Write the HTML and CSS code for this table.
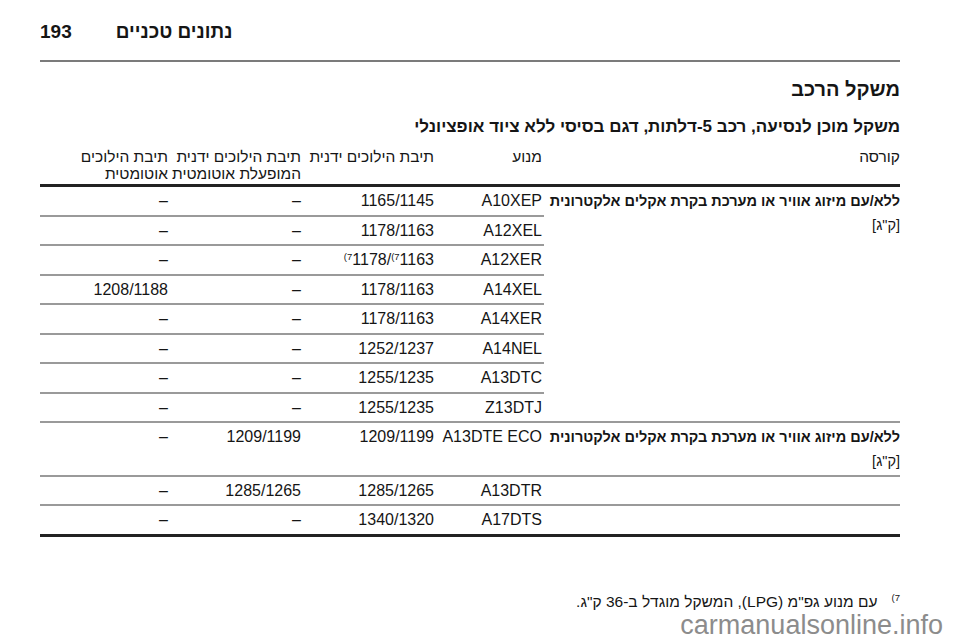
FILE: index.html
```html
<!DOCTYPE html>
<html lang="he">
<head>
<meta charset="utf-8">
<title>משקל הרכב</title>
<link rel="stylesheet" href="styles.css">
</head>
<body>
<div class="page">
  <header class="running-head">
    <span class="page-no">193</span>
    <span class="chapter" dir="rtl">נתונים טכניים</span>
  </header>
  <main class="content" dir="rtl">
    <h1 class="title">משקל הרכב</h1>
    <h2 class="subtitle">משקל מוכן לנסיעה, רכב 5-דלתות, דגם בסיסי ללא ציוד אופציונלי</h2>
    <table class="weights">
      <colgroup>
        <col class="c1"><col class="c2"><col class="c3"><col class="c4"><col class="c5">
      </colgroup>
      <thead>
        <tr>
          <th class="body-col">קורסה</th>
          <th class="eng">מנוע</th>
          <th>תיבת הילוכים ידנית</th>
          <th>תיבת הילוכים ידנית<br>המופעלת אוטומטית</th>
          <th>תיבת הילוכים<br>אוטומטית</th>
        </tr>
      </thead>
      <tbody class="group">
        <tr>
          <td class="body-col" rowspan="8"><b>ללא/עם מיזוג אוויר או מערכת בקרת אקלים אלקטרונית</b><br>[ק"ג]</td>
          <td class="eng num">A10XEP</td><td class="num">1165/1145</td><td class="num">–</td><td class="num">–</td>
        </tr>
        <tr><td class="eng num">A12XEL</td><td class="num">1178/1163</td><td class="num">–</td><td class="num">–</td></tr>
        <tr><td class="eng num">A12XER</td><td class="num"><sup>(7</sup>1178/<sup>(7</sup>1163</td><td class="num">–</td><td class="num">–</td></tr>
        <tr><td class="eng num">A14XEL</td><td class="num">1178/1163</td><td class="num">–</td><td class="num">1208/1188</td></tr>
        <tr><td class="eng num">A14XER</td><td class="num">1178/1163</td><td class="num">–</td><td class="num">–</td></tr>
        <tr><td class="eng num">A14NEL</td><td class="num">1252/1237</td><td class="num">–</td><td class="num">–</td></tr>
        <tr><td class="eng num">A13DTC</td><td class="num">1255/1235</td><td class="num">–</td><td class="num">–</td></tr>
        <tr><td class="eng num">Z13DTJ</td><td class="num">1255/1235</td><td class="num">–</td><td class="num">–</td></tr>
      </tbody>
      <tbody class="group last">
        <tr class="tall">
          <td class="body-col"><b>ללא/עם מיזוג אוויר או מערכת בקרת אקלים אלקטרונית</b><br>[ק"ג]</td>
          <td class="eng num">A13DTE ECO</td><td class="num">1209/1199</td><td class="num">1209/1199</td><td class="num">–</td>
        </tr>
        <tr><td class="body-col"></td><td class="eng num">A13DTR</td><td class="num">1285/1265</td><td class="num">1285/1265</td><td class="num">–</td></tr>
        <tr><td class="body-col"></td><td class="eng num">A17DTS</td><td class="num">1340/1320</td><td class="num">–</td><td class="num">–</td></tr>
      </tbody>
    </table>
    <p class="footnote"><span class="fn-mark">(7</span>עם מנוע גפ"מ (LPG), המשקל מוגדל ב-36 ק"ג.</p>
  </main>
  <div class="watermark">carmanualsonline.info</div>
</div>
</body>
</html>
```

FILE: styles.css
```css
html, body {
  margin: 0;
  padding: 0;
  background: #ffffff;
}

body {
  font-family: "Liberation Sans", "DejaVu Sans", Arial, sans-serif;
  color: #151515;
}

.page {
  width: 860px;
  padding: 0 60px 0 40px;
}

.running-head {
  display: flex;
  align-items: baseline;
  gap: 44px;
  height: 20px;
  padding-top: 22px;
  padding-bottom: 18px;
  line-height: 20px;
  border-bottom: 2px solid #7b7b7b;
}

.page-no {
  font-size: 19px;
  font-weight: bold;
}

.chapter {
  font-size: 19px;
  font-weight: bold;
}

.content {
  text-align: right;
}

.title {
  margin: 14px 0 0;
  font-size: 20px;
  line-height: 26px;
  font-weight: bold;
}

.subtitle {
  margin: 15px 0 0;
  font-size: 17px;
  line-height: 20px;
  font-weight: bold;
}

.weights {
  margin-top: 9px;
  width: 860px;
  table-layout: fixed;
  border-collapse: collapse;
}

.c1 { width: 356px; }
.c2 { width: 104px; }
.c3 { width: 133px; }
.c4 { width: 133px; }
.c5 { width: 134px; }

.weights th {
  font-weight: normal;
  font-size: 15.5px;
  line-height: 17px;
  text-align: right;
  vertical-align: top;
  white-space: nowrap;
  padding: 2px 6px 2px 0;
  border-bottom: 3px solid #222222;
}

.weights td {
  font-size: 16px;
  line-height: 24px;
  text-align: right;
  vertical-align: top;
  white-space: nowrap;
  padding: 2px 6px 1.5px 0;
  border-bottom: 2px solid #9a9a9a;
}

.weights td.body-col {
  padding-right: 0;
  font-size: 14.5px;
}

.weights th.body-col {
  padding-right: 0;
}

.weights .eng {
  padding-right: 2px;
}

.weights td.num {
  direction: ltr;
}

.group.last tr:last-child td {
  border-bottom: 3px solid #222222;
}

sup {
  font-size: 9.5px;
  line-height: 0;
  vertical-align: 5px;
}

.footnote {
  margin: 55px 0 0;
  font-size: 15.5px;
  line-height: 20px;
}

.fn-mark {
  direction: ltr;
  unicode-bidi: isolate;
  display: inline-block;
  font-size: 9.5px;
  line-height: 0;
  vertical-align: 6px;
  margin-left: 14px;
}

.watermark {
  margin-right: -43px;
  text-align: right;
  font-size: 27px;
  line-height: 27px;
  color: #8c8c8c;
}
```
